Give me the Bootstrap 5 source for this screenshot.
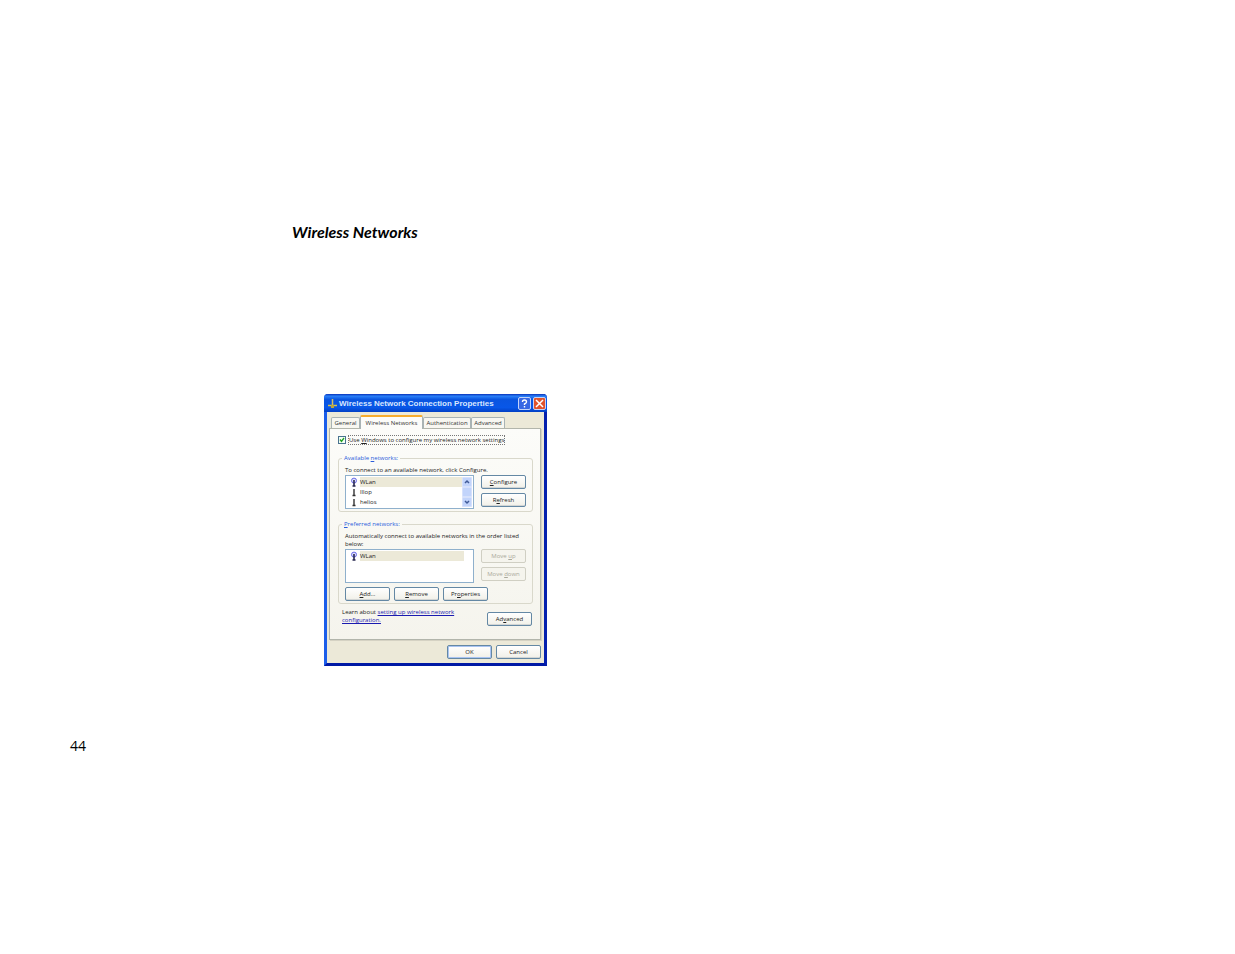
<!DOCTYPE html>
<html lang="en">
<head>
<meta charset="utf-8">
<meta name="viewport" content="width=device-width, initial-scale=1">
<title>Wireless Networks</title>
<link rel="stylesheet" href="https://cdn.jsdelivr.net/npm/bootstrap@5.3.0/dist/css/bootstrap.min.css">
<style>
body { background: #fff; color: #000; font-family: "Liberation Sans", Arial, sans-serif; }
.page { padding: 222px 70px 0; }
.chapter { margin-left: 222px; font: italic 700 16px/20px Lato, sans-serif; }
.folio { font: 14px/20px "Open Sans", sans-serif; margin-top: 70px; }
.dialog-xp { width: 223px; margin: 152px 0 0 254px; background: #ece9d8; border: 3px solid #0a3bd0; border-left-color: #1c5eea; border-right-color: #0420ae; border-bottom-color: #0019a5; border-top: 0; border-radius: 4px 4px 0 0; font-family: "Open Sans", sans-serif; font-size: 6px; line-height: 8px; color: #222; }
.caption { height: 18px; margin: 0 -3px; padding: 1px 1px 0 4px; border-radius: 4px 4px 0 0; background: linear-gradient(#0831b8, #2a80f8 12%, #0a55e0 30%, #0857e8 75%, #0340c4); color: #fff; gap: 2px; }
.caption h2 { font: bold 8px/16px "Liberation Sans", sans-serif; margin: 0; color: #d8e6ff; white-space: nowrap; }
.capbtn { width: 13px; height: 13px; padding: 0; border: 1px solid #c4d4fa; border-radius: 2px; background: #3868e4; display: flex; }
.capbtn.shut { background: #e0532c; }
.capbtn svg { width: 11px; height: 11px; }
.tabs-xp { padding: 3px 0 0 4px; height: 16px; }
.tab-xp { height: 11px; padding: 0; font-size: 6px; line-height: 10px; color: #333; background: #f8f7f1; border: 1px solid #a9b3b4; border-bottom: 0; border-radius: 2px 2px 0 0; text-align: center; white-space: nowrap; }
.tab-xp.active { height: 14px; margin-bottom: -1px; border-top: 2px solid #f6ac2d; background: #fcfcf9; position: relative; }
.w29 { width: 29px; } .w34 { width: 34px; } .w47 { width: 48px; } .w62 { width: 63px; }
.sheet { margin: 0 3px 0 2px; padding: 6px 7px 0 8px; border: 1px solid #b2b5ab; background: linear-gradient(#fcfcf9, #f5f4ed); height: 212px; box-shadow: 1px 1px 0 #d5d2c3; }
.tick { appearance: none; width: 8px; height: 8px; margin: 0; border: 1px solid #49728f; background: #f4fff4 url("data:image/svg+xml,%3Csvg xmlns='http://www.w3.org/2000/svg' viewBox='0 0 6 6'%3E%3Cpath d='M1 2.5L2.5 4.5L5 1' fill='none' stroke='%2321a121' stroke-width='1.3'/%3E%3C/svg%3E"); flex: none; }
.focused { border: 1px dotted #777; line-height: 8px; white-space: nowrap; margin-left: 2px; }
.group-xp { border: 1px solid #d9d8cb; border-radius: 3px; padding: 0 6px 2px 6px; min-width: 0; }
.first-group { margin-top: 9px; }
.group-xp legend { float: none; width: auto; margin: 0 0 4px -3px; padding: 0 2px; font-size: 6px; line-height: 8px; color: #2a5ddb; }
.group-xp p { margin: 0 0 1px; white-space: nowrap; }
.listing { width: 129px; height: 34px; border: 1px solid #8fb0cc; background: #fff; padding: 1px; margin: 0; }
.listing ul { margin: 0; padding: 0; list-style: none; }
.listing li { display: flex; align-items: center; height: 10px; line-height: 10px; padding-left: 3px; }
.listing li svg { width: 8px; height: 10px; margin-right: 2px; }
.listing li span { flex: 1; }
.listing .picked span { background: #ece9d8; }
.scroller { width: 10px; background: #edf2fc; }
.scroller i { display: block; height: 10px; background: #c2d4fb; border: 1px solid #d6e1fc; border-radius: 1px; }
.scroller svg { display: block; width: 8px; height: 8px; }
.btn-xp { width: 45px; height: 14px; padding: 0; font-size: 6px; line-height: 12px; color: #222; background: linear-gradient(#fff, #f1f0e8); border: 1px solid #6488a4; border-radius: 2px; text-align: center; box-shadow: inset 0 -1px 0 #d2d5d4; }
.btn-xp.main-choice { box-shadow: inset 0 0 0 1px #a9c4f2; }
.btn-xp:disabled { color: #aaa99b; border-color: #d0cfc3; background: #f5f4ed; box-shadow: none; }
.help-text { margin-right: 1px; }
.help-text a { color: #1a1ab0; }
.actions { padding: 5px 3px 4px; }
</style>
</head>
<body>
<svg class="d-none" aria-hidden="true">
<symbol id="linked" viewBox="0 0 8 10"><circle cx="4" cy="3.6" r="2.5" fill="#dfe0ff" stroke="#6a6ae6"/><path d="M4 3v2M4 5v4M2.5 9h3" stroke="#292950" stroke-width="1.6"/></symbol>
<symbol id="station" viewBox="0 0 8 10"><path d="M4 2v2M4 4v4M2.5 8.5h3" stroke="#333" stroke-width="1.4"/></symbol>
</svg>
<main class="page">
<h1 class="chapter mb-0">Wireless Networks</h1>
<section class="dialog-xp" aria-label="Wireless Network Connection Properties">
<header class="caption d-flex align-items-center">
<svg width="9" height="11" viewBox="0 0 9 11" aria-hidden="true"><path d="M4.500 1v6" stroke="#d6c060" stroke-width="1.500"/><path d="M0 7.500h9" stroke="#d6c34b" stroke-width="1.500"/><path d="M3 7h3v3H3z" fill="#bda53b"/></svg>
<h2 class="flex-grow-1">Wireless Network Connection Properties</h2>
<button type="button" class="capbtn" aria-label="Help"><svg viewBox="0 0 11 11"><path d="M3.500 4Q3.500 2 5.500 2T7.500 4Q7.500 5 5.500 6v1M5.500 8v1.500" fill="none" stroke="#fff" stroke-width="1.400"/></svg></button>
<button type="button" class="capbtn shut" aria-label="Close"><svg viewBox="0 0 11 11"><path d="M2 2l7 7M9 2l-7 7" stroke="#fff" stroke-width="1.500"/></svg></button>
</header>
<div class="tabs-xp d-flex align-items-end" role="tablist">
<button type="button" role="tab" class="tab-xp w29">General</button>
<button type="button" role="tab" class="tab-xp w62 active" aria-selected="true">Wireless Networks</button>
<button type="button" role="tab" class="tab-xp w47">Authentication</button>
<button type="button" role="tab" class="tab-xp w34">Advanced</button>
</div>
<div class="sheet">
<div class="d-flex align-items-center"><input class="tick" type="checkbox" id="auto" checked><label class="focused" for="auto">Use <u>W</u>indows to configure my wireless network settings</label></div>
<fieldset class="group-xp first-group">
<legend>Available <u>n</u>etworks:</legend>
<p>To connect to an available network, click Configure.</p>
<div class="d-flex justify-content-between">
<div class="listing d-flex"><ul class="flex-grow-1">
<li class="picked"><svg aria-hidden="true"><use href="#linked"/></svg><span>WLan</span></li>
<li><svg aria-hidden="true"><use href="#station"/></svg><span>lllop</span></li>
<li><svg aria-hidden="true"><use href="#station"/></svg><span>helios</span></li></ul>
<div class="scroller d-flex flex-column justify-content-between" aria-hidden="true"><i><svg viewBox="0 0 8 8"><path d="M2 5l2-2 2 2" fill="none" stroke="#405a98" stroke-width="1.500"/></svg></i><i></i><i><svg viewBox="0 0 8 8"><path d="M2 3l2 2 2-2" fill="none" stroke="#405a98" stroke-width="1.500"/></svg></i></div></div>
<div class="d-flex flex-column gap-1"><button type="button" class="btn-xp"><u>C</u>onfigure</button><button type="button" class="btn-xp">R<u>e</u>fresh</button></div>
</div>
</fieldset>
<fieldset class="group-xp mt-2">
<legend><u>P</u>referred networks:</legend>
<p>Automatically connect to available networks in the order listed<br>below:</p>
<div class="d-flex justify-content-between">
<div class="listing"><ul><li class="picked me-2"><svg aria-hidden="true"><use href="#linked"/></svg><span>WLan</span></li></ul></div>
<div class="d-flex flex-column gap-1"><button type="button" class="btn-xp" disabled>Move <u>u</u>p</button><button type="button" class="btn-xp" disabled>Move <u>d</u>own</button></div>
</div>
<div class="d-flex gap-1 mt-1"><button type="button" class="btn-xp"><u>A</u>dd...</button><button type="button" class="btn-xp"><u>R</u>emove</button><button type="button" class="btn-xp">Pr<u>o</u>perties</button></div>
</fieldset>
<div class="d-flex justify-content-between mt-1 ps-1 help-text">
<div>Learn about <a href="#setup">setting up wireless network<br>configuration.</a></div>
<button type="button" class="btn-xp mt-1">Ad<u>v</u>anced</button>
</div>
</div>
<footer class="actions d-flex justify-content-end gap-1"><button type="button" class="btn-xp main-choice">OK</button><button type="button" class="btn-xp">Cancel</button></footer>
</section>
<div class="folio">44</div>
</main>
<script src="https://cdn.jsdelivr.net/npm/bootstrap@5.3.0/dist/js/bootstrap.bundle.min.js"></script>
</body>
</html>
